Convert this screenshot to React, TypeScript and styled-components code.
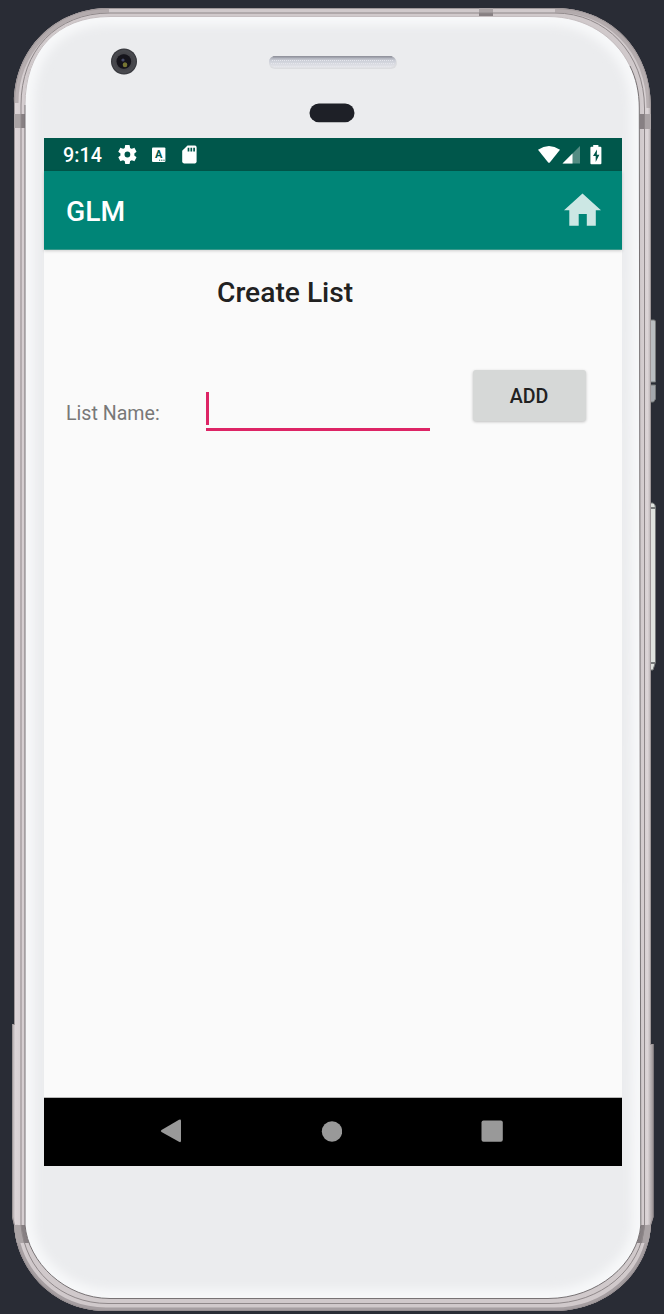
import React from "react";
import styled, { createGlobalStyle } from "styled-components";

const GlobalStyle = createGlobalStyle`
  *, *::before, *::after { box-sizing: border-box; }
  html, body { margin: 0; background: #292c35; }
  body { font-family: Roboto, "Liberation Sans", sans-serif; overflow: hidden; }
`;

const Stage = styled.main`
  display: grid;
  width: 664px;
  height: 1314px;
  background: #292c35;
`;

const PhoneBody = styled.svg`
  grid-area: 1 / 1;
  display: block;
`;

const Screen = styled.section`
  grid-area: 1 / 1;
  z-index: 1;
  display: flex;
  flex-direction: column;
  width: 578px;
  height: 1028px;
  margin: 138px 0 0 44px;
  background: #fafafa;
`;

const StatusBar = styled.div`
  display: flex;
  align-items: center;
  justify-content: space-between;
  height: 33px;
  padding: 0 20px 0 19px;
  background: #00574b;
  color: #fff;
`;

const StatusGroup = styled.div<{ $gap: number }>`
  display: flex;
  align-items: center;
  gap: ${(p) => p.$gap}px;
`;

const Clock = styled.span`
  width: 41px;
  padding-top: 2px;
  font-size: 19.7px;
  line-height: 31px;
  font-weight: 500;
  letter-spacing: 0.1px;
  white-space: nowrap;
`;

const Glyph = styled.svg`
  display: block;
  flex: none;
`;

const AppBar = styled.header`
  display: flex;
  align-items: center;
  justify-content: space-between;
  height: 79px;
  padding: 0 21px 0 22px;
  border-bottom: 1px solid #38988b;
  background: #008577;
  color: #fff;
  box-shadow: 0 1px 3px rgba(0, 0, 0, 0.18);
`;

const AppTitle = styled.h1`
  margin: 4px 0 0;
  font-size: 28.2px;
  line-height: 34px;
  font-weight: 500;
`;

const Content = styled.div`
  flex: 1;
  display: flex;
  flex-direction: column;
`;

const Heading = styled.h2`
  margin: 26px 0 0 173px;
  font-size: 28.2px;
  line-height: 34px;
  font-weight: 500;
  color: #212121;
`;

const FormRow = styled.div`
  display: flex;
  align-items: flex-start;
  margin-top: 60px;
  padding-left: 22px;
`;

const Label = styled.label`
  width: 140px;
  margin-top: 32px;
  font-size: 19.6px;
  line-height: 24px;
  color: #787878;
  white-space: nowrap;
`;

const Field = styled.div`
  width: 224px;
  height: 39px;
  margin-top: 22px;
  border-bottom: 3px solid #dd2465;
`;

const Caret = styled.div`
  width: 3px;
  height: 33px;
  background: #dd2465;
`;

const AddButton = styled.button`
  width: 113px;
  height: 51px;
  margin-left: 43px;
  padding: 2px 1px 0 0;
  border: 0;
  border-radius: 3px;
  background: #d6d8d7;
  box-shadow: 0 1px 3px rgba(0, 0, 0, 0.24);
  color: #212121;
  font: 500 19.6px/24px Roboto, "Liberation Sans", sans-serif;
`;

const NavBar = styled.nav`
  display: flex;
  align-items: center;
  justify-content: space-between;
  height: 69px;
  padding: 0 119px 2px 116px;
  border-top: 1px solid #b8b8b8;
  background: #000;
`;

const OUTER =
  "M109 8H555C608 8 651 47 651 107V1044H653.5V1217L651 1225C648 1274 606 1311 554 1311H106C55 1311 17 1272 14 1225L12 1217V1024H14V103C14 50 54 8 109 8Z";
const RAIL =
  "M110 13H555C606 13 644.5 54 644.5 108V1225C641 1269 601 1303.5 550 1303.5H108C61 1303.5 25 1270 21 1225V105C21 51 56 13 110 13Z";
const FACE =
  "M110 16.5H548C600 16.5 639.3 56 639.3 108L640.8 1225C638 1263 598 1298.3 548 1298.3H110C65 1298.3 28 1262 25 1225V105C25 52 56 16.5 110 16.5Z";

function Bezel() {
  return (
    <PhoneBody width="664" height="1314" viewBox="0 0 664 1314" aria-hidden="true">
      <defs>
        <linearGradient id="metal" x1="0" x2="1" y1="0" y2="0">
          <stop offset="0" stopColor="#a69fa1" />
          <stop offset="0.005" stopColor="#ddd5d8" />
          <stop offset="0.025" stopColor="#d0c9cb" />
          <stop offset="0.98" stopColor="#d0c9cb" />
          <stop offset="0.991" stopColor="#dcd5d7" />
          <stop offset="1" stopColor="#979092" />
        </linearGradient>
        <linearGradient id="speaker" x1="0" x2="0" y1="0" y2="1">
          <stop offset="0" stopColor="#9a9ca6" />
          <stop offset="0.4" stopColor="#cccfd8" />
          <stop offset="1" stopColor="#e5e6ea" />
        </linearGradient>
        <radialGradient id="lens">
          <stop offset="0" stopColor="#16151c" />
          <stop offset="0.45" stopColor="#1c1c20" />
          <stop offset="0.58" stopColor="#434348" />
          <stop offset="0.85" stopColor="#4a4b50" />
          <stop offset="1" stopColor="#303136" />
        </radialGradient>
        <filter id="soften" x="-5%" y="-5%" width="110%" height="110%">
          <feGaussianBlur stdDeviation="5" />
        </filter>
        <clipPath id="faceClip">
          <path d={FACE} />
        </clipPath>
        <clipPath id="bodyClip">
          <path d={OUTER} />
        </clipPath>
      </defs>

      <g stroke="#777a7b">
        <path d="M650 320h4q1.500 0 1.500 2v60h-6z" fill="#b8bdc1" />
        <path d="M650 385h5.500v14l-2 3h-3.500z" fill="#a4a8ad" />
        <path d="M650 503h3q2.500 1 2.500 5v154l-2.500 8h-3z" fill="#dfe3df" />
        <path d="M650 508h5M650 663h5" strokeWidth="2" />
      </g>

      <path d={OUTER} fill="url(#metal)" />
      <g clipPath="url(#bodyClip)">
        <path d={OUTER} fill="none" stroke="#9e9799" strokeWidth="2" />
        <path d="M14 1225C17 1272 55 1311 106 1311H554C606 1311 648 1274 651 1225" fill="none" stroke="#938b8e" strokeWidth="7" opacity="0.7" />
        <path d="M16 103C16 52 55 10 109 10M555 10C607 10 649 48 649 108" fill="none" stroke="#a0979a" strokeWidth="5" opacity="0.6" />
        <path d="M13 114h12v14H13zM479 8h14v8h-14zM639 114h13v15h-13z" fill="#aaa3a5" />
        <path d="M14 1225h11l4 18H15zM641 1225h11l-1 18h-14z" fill="#aaa3a5" />
        <path d="M21 114h4v14h-4zM479 13h14v3h-14zM639 114h5v15h-5zM21 1225h4l4 18h-5zM641 1225h4l-3 18h-5z" fill="#878083" />
      </g>
      <path d={RAIL} fill="none" stroke="#8f888a" />
      <path d={FACE} fill="#ebecee" />
      <g clipPath="url(#faceClip)">
        <path d={FACE} fill="none" stroke="#f7f8f9" strokeWidth="18" filter="url(#soften)" />
      </g>
      <path d="M25 105V1225C28 1262 65 1298.500 110 1298.500H548C598 1298.500 638 1263 640.800 1225L639.300 108C639.300 92 636 78 630 66" fill="none" stroke="#777274" />
      <path d="M25 105C25 52 56 16.500 110 16.500H548C586 16.500 616 37 630 66" fill="none" stroke="#c5bec0" />

      <circle cx="124" cy="61.500" r="13" fill="url(#lens)" />
      <circle cx="123.800" cy="61.500" r="7.300" fill="#15141b" />
      <circle cx="123" cy="60" r="1.600" fill="#454967" />
      <ellipse cx="125" cy="64.800" rx="2.300" ry="2.500" fill="#777633" />
      <rect x="269" y="57" width="128" height="12" rx="6" fill="#dcdde0" />
      <rect x="269" y="56" width="127" height="11.500" rx="5.700" fill="url(#speaker)" />
      <path d="M272 60.500H393M271 63.500H394M274 66.500H392" stroke="#e6e7ed" strokeWidth="1" strokeDasharray="1 1" />
      <path d="M273 56.800H392" stroke="#8d8f99" />
      <rect x="309.500" y="103.500" width="45" height="18.800" rx="9.400" fill="#1e2027" />
    </PhoneBody>
  );
}

export default function App() {
  return (
    <>
      <GlobalStyle />
      <Stage>
        <Bezel />
        <Screen>
          <StatusBar>
            <StatusGroup $gap={14}>
              <Clock>9:14</Clock>
              <Glyph width="19" height="19" viewBox="1.900 2 20.400 20" preserveAspectRatio="none" fill="#fff">
                <path d="M19.430 12.980c.04-.32.07-.64.07-.98s-.03-.66-.07-.98l2.110-1.650c.19-.15.24-.42.12-.64l-2-3.460c-.12-.22-.39-.3-.61-.22l-2.490 1c-.52-.4-1.080-.73-1.690-.98l-.38-2.650A.49.490 0 0 0 14 2h-4c-.25 0-.46.18-.49.420l-.38 2.650c-.61.25-1.170.59-1.690.98l-2.490-1c-.23-.09-.49 0-.61.220l-2 3.460c-.13.220-.07.490.12.640l2.110 1.650c-.04.320-.07.650-.07.980s.03.660.07.980l-2.110 1.650c-.19.150-.24.420-.12.640l2 3.460c.12.220.39.300.61.220l2.490-1c.52.400 1.080.730 1.690.980l.38 2.650c.03.240.24.420.49.420h4c.25 0 .46-.18.49-.42l.38-2.650c.61-.25 1.170-.59 1.690-.98l2.490 1c.23.090.49 0 .61-.22l2-3.460c.12-.22.070-.49-.12-.64zM12 15.100a3.100 3.100 0 1 1 0-6.200 3.100 3.100 0 0 1 0 6.200z" />
              </Glyph>
              <Glyph width="16" height="16" viewBox="0 0 16 16">
                <rect x="1" y=".5" width="13.400" height="14.400" rx="1" fill="#fff" />
                <text x="7.600" y="11" textAnchor="middle" fontFamily="Roboto, sans-serif" fontWeight="700" fontSize="11" fill="#00574b">
                  A
                </text>
                <path d="M8 13.200h6" stroke="#00574b" strokeWidth="1" strokeDasharray="1.200 1" />
              </Glyph>
              <Glyph width="17" height="19" viewBox="0 0 17 19">
                <path d="M6.500 .6H14q1.600 0 1.600 1.800v14.200q0 1.800-1.600 1.800H3q-1.800 0-1.800-1.800V5.800z" fill="#fff" />
                <path d="M7.500 2.800v3.700M10.300 2.800v3.700M13.100 2.800v3.700" stroke="#00574b" strokeWidth="1.700" />
              </Glyph>
            </StatusGroup>
            <StatusGroup $gap={2}>
              <Glyph width="22" height="18" viewBox="0 0 22 18" fill="#fff">
                <path d="M0 3.700Q11-3.700 22 3.700L12 16.300q-1 1-2 0z" />
              </Glyph>
              <Glyph width="19" height="18" viewBox="0 0 19 18">
                <path d="M.5 17.500 18 0v17.500z" fill="#548c83" />
                <path d="M.5 17.500 10.500 7.500v10z" fill="#fff" />
              </Glyph>
              <Glyph width="19" height="20" viewBox="0 0 19 20">
                <path d="M10.500 0h5.200v2h2q1 0 1 1v15.500q0 1-1 1h-9q-1 0-1-1V3q0-1 1-1h1.800z" fill="#fff" transform="translate(-.3 -.2)" />
                <path d="M14 4.500 10 11h2.700v6l3.700-7.200h-2.600z" fill="#00574b" />
              </Glyph>
            </StatusGroup>
          </StatusBar>
          <AppBar>
            <AppTitle>GLM</AppTitle>
            <Glyph width="37" height="34" viewBox="0 0 37 34" fill="#cce7e4">
              <path d="M18.500 .5 37 17.200h-5.200v15.600h-9V21h-8.100v11.800H5.300V17.200H0z" />
            </Glyph>
          </AppBar>
          <Content>
            <Heading>Create List</Heading>
            <FormRow>
              <Label>List Name:</Label>
              <Field>
                <Caret />
              </Field>
              <AddButton>ADD</AddButton>
            </FormRow>
          </Content>
          <NavBar>
            <Glyph width="22" height="24" viewBox="0 0 22 24" fill="#999">
              <path d="M1.500 11 19 .8q2-.8 2 1v20q0 2-2 1L1.500 13q-1.500-1 0-2z" />
            </Glyph>
            <Glyph width="21" height="21" viewBox="-.5 0 21 21" fill="#999">
              <circle cx="10.500" cy="10.500" r="10.200" />
            </Glyph>
            <Glyph width="22" height="22" viewBox="0 0 22 22" fill="#999">
              <rect x=".5" y=".5" width="21.300" height="21.300" rx="2" />
            </Glyph>
          </NavBar>
        </Screen>
      </Stage>
    </>
  );
}
